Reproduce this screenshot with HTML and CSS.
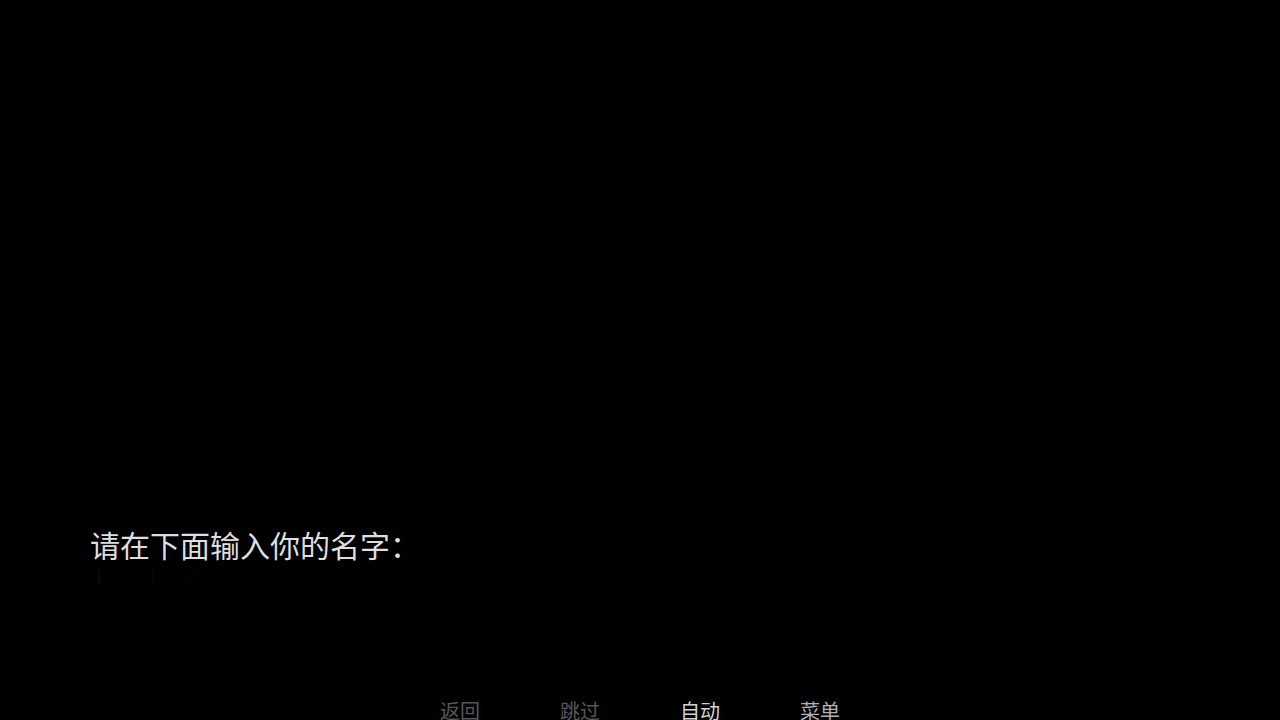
FILE: index.html
```html
<!DOCTYPE html>
<html lang="zh-CN">
<head>
<meta charset="utf-8">
<title>输入名字</title>
<link rel="stylesheet" href="styles.css">
</head>
<body>
<main class="screen">
  <section class="input-panel">
    <p class="prompt">请在下面输入你的名字：</p>
    <p class="input-line">丨　　｜　／</p>
  </section>
  <nav class="quick-menu">
    <span class="qm-item dim">返回</span>
    <span class="qm-item dim">跳过</span>
    <span class="qm-item bright">自动</span>
    <span class="qm-item mid">菜单</span>
  </nav>
</main>
</body>
</html>
```
FILE: styles.css
```css
html, body {
  margin: 0;
  padding: 0;
  background: #000;
  overflow: hidden;
}
body {
  font-family: "Noto Sans CJK SC", "Noto Sans", sans-serif;
}
.screen {
  width: 1280px;
  height: 720px;
  display: flex;
  flex-direction: column;
  overflow: hidden;
}
.input-panel {
  padding: 527px 0 0 90px;
}
.prompt {
  margin: 0;
  font-size: 30px;
  line-height: 34px;
  color: #dedede;
}
.input-line {
  margin: 3px 0 0;
  height: 24px;
  font-size: 18px;
  line-height: 24px;
  color: #0e0e0e;
  white-space: pre;
}
.quick-menu {
  margin-top: 111px;
  display: flex;
  justify-content: center;
  gap: 80px;
}
.qm-item {
  font-size: 20px;
  line-height: 24px;
  width: 40px;
  white-space: nowrap;
}
.dim { color: #575757; }
.bright { color: #d2d2d2; }
.mid { color: #b2b2b2; }
```
